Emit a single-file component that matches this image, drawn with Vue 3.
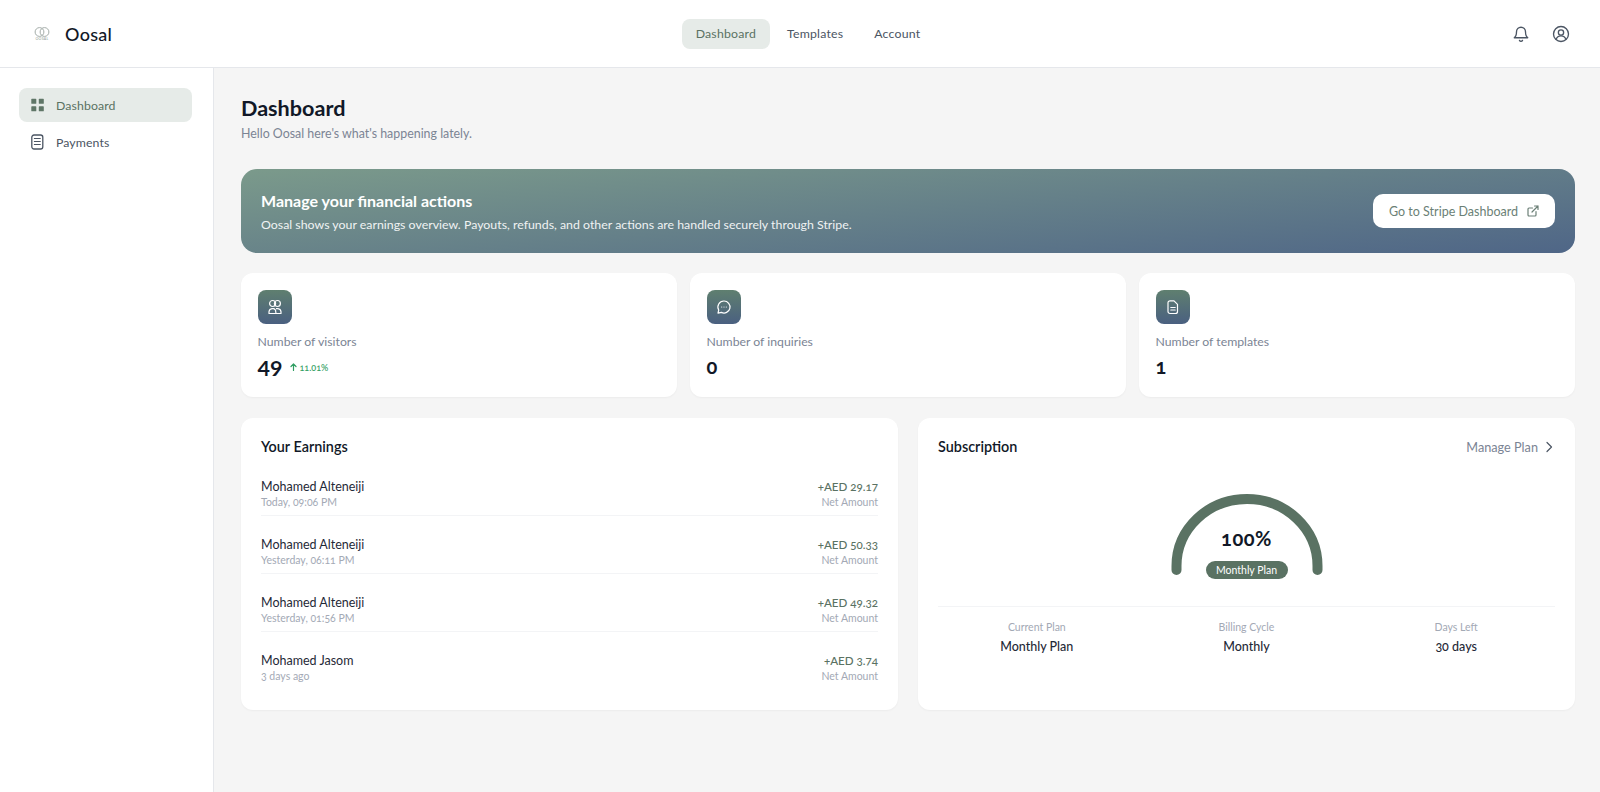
<script setup>
const earnings = [
  { name: 'Mohamed Alteneiji', time: 'Today, 09:06 PM', amount: '+AED 29.17' },
  { name: 'Mohamed Alteneiji', time: 'Yesterday, 06:11 PM', amount: '+AED 50.33' },
  { name: 'Mohamed Alteneiji', time: 'Yesterday, 01:56 PM', amount: '+AED 49.32' },
  { name: 'Mohamed Jasom', time: '3 days ago', amount: '+AED 3.74' },
]
const facts = [
  { label: 'Current Plan', value: 'Monthly Plan' },
  { label: 'Billing Cycle', value: 'Monthly' },
  { label: 'Days Left', value: '30 days' },
]
</script>

<template>
  <div class="app">
    <header class="topbar">
      <div class="brand">
        <div class="logo">
          <svg width="16" height="10" viewBox="0 0 16 10" fill="none" stroke="#a3aca8" stroke-width="1">
            <circle cx="5.500" cy="5" r="4.400" />
            <circle cx="10.500" cy="5" r="4.400" />
          </svg>
          <span class="logo-text">OOSAL</span>
        </div>
        <span class="brand-name">Oosal</span>
      </div>
      <nav class="topnav">
        <a class="topnav-item active">Dashboard</a>
        <a class="topnav-item">Templates</a>
        <a class="topnav-item">Account</a>
      </nav>
      <div class="top-actions">
        <svg width="18" height="18" viewBox="0 0 24 24" fill="none" stroke="#4b5563" stroke-width="1.800" stroke-linecap="round" stroke-linejoin="round">
          <path d="M6 9a6 6 0 0 1 12 0c0 5 1.500 7 3 8H3c1.500-1 3-3 3-8z" />
          <path d="M10 20.500a2.200 2.200 0 0 0 4 0" />
        </svg>
        <svg width="18" height="18" viewBox="0 0 24 24" fill="none" stroke="#4b5563" stroke-width="1.800" stroke-linecap="round" stroke-linejoin="round">
          <circle cx="12" cy="12" r="10" />
          <circle cx="12" cy="10" r="3.500" />
          <path d="M5.500 19c1-3 3.500-4.500 6.500-4.500s5.500 1.500 6.500 4.500" />
        </svg>
      </div>
    </header>

    <div class="body">
      <aside class="sidebar">
        <a class="side-item active">
          <svg width="14" height="14" viewBox="0 0 14 14" fill="#5f7667">
            <rect x="0.300" y="0.800" width="5" height="5" rx="0.600" />
            <rect x="7.800" y="0.800" width="5" height="5" rx="0.600" />
            <rect x="0.300" y="8.300" width="5" height="5" rx="0.600" />
            <rect x="7.800" y="8.300" width="5" height="5" rx="0.600" />
          </svg>
          <span>Dashboard</span>
        </a>
        <a class="side-item">
          <svg width="14" height="16" viewBox="0 0 14 16" fill="none" stroke="#4b5563" stroke-width="1.300" stroke-linecap="round">
            <rect x="0.800" y="1" width="11" height="14" rx="2.200" />
            <path d="M3.300 4.500h6M3.300 7.500h6M3.300 10.500h6" stroke-width="1" />
          </svg>
          <span>Payments</span>
        </a>
      </aside>

      <main class="main">
        <h1 class="title">Dashboard</h1>
        <p class="subtitle">Hello Oosal here's what's happening lately.</p>

        <section class="banner">
          <div class="banner-copy">
            <h2 class="banner-title">Manage your financial actions</h2>
            <p class="banner-text">Oosal shows your earnings overview. Payouts, refunds, and other actions are handled securely through Stripe.</p>
          </div>
          <button class="banner-btn">
            <span>Go to Stripe Dashboard</span>
            <svg width="12" height="12" viewBox="0 0 24 24" fill="none" stroke="#6b7f76" stroke-width="2.400" stroke-linecap="round" stroke-linejoin="round">
              <path d="M18 13v7a2 2 0 0 1-2 2H4a2 2 0 0 1-2-2V8a2 2 0 0 1 2-2h7" />
              <path d="M15 2h7v7M10 14L22 2" />
            </svg>
          </button>
        </section>

        <section class="stats">
          <div class="card stat">
            <div class="tile">
              <svg width="16" height="16" viewBox="0 0 16 16" fill="none" stroke="#fff" stroke-width="1.200" stroke-linejoin="round">
                <circle cx="5.600" cy="4.500" r="3" />
                <circle cx="10.400" cy="4.500" r="3" />
                <path d="M2 14.500v-1.800a3.500 3.500 0 0 1 3-3h1.500a3 3 0 0 1 2 1.500l.5 3.300z" />
                <path d="M9 14.500h5v-1.800a3.500 3.500 0 0 0-3-3H9" />
              </svg>
            </div>
            <div class="stat-label">Number of visitors</div>
            <div class="stat-row">
              <span class="stat-value large">49</span>
              <span class="trend">
                <svg width="7" height="8" viewBox="0 0 7 8" fill="none" stroke="#2f9e62" stroke-width="1.200" stroke-linecap="round" stroke-linejoin="round">
                  <path d="M3.500 7.500V1M1 3.500L3.500 1 6 3.500" />
                </svg>
                11.01%
              </span>
            </div>
          </div>
          <div class="card stat">
            <div class="tile">
              <svg width="16" height="16" viewBox="0 0 16 16" fill="none" stroke="#fff" stroke-width="1.200" stroke-linecap="round" stroke-linejoin="round">
                <path d="M8 2a6 6 0 1 1-2.600 11.400L2 14.200l.7-3.200A6 6 0 0 1 8 2z" />
                <path d="M5.700 8h.01M8 8h.01M10.300 8h.01" />
              </svg>
            </div>
            <div class="stat-label">Number of inquiries</div>
            <div class="stat-row"><span class="stat-value">0</span></div>
          </div>
          <div class="card stat">
            <div class="tile">
              <svg width="16" height="16" viewBox="0 0 16 16" fill="none" stroke="#fff" stroke-width="1.200" stroke-linecap="round" stroke-linejoin="round">
                <path d="M5 1.800h4l3.500 3.500V12.500a2 2 0 0 1-2 2H5a2 2 0 0 1-2-2V3.800a2 2 0 0 1 2-2z" />
                <path d="M5.800 8.500h4.400M5.800 11h4.400" />
              </svg>
            </div>
            <div class="stat-label">Number of templates</div>
            <div class="stat-row"><span class="stat-value">1</span></div>
          </div>
        </section>

        <section class="lower">
          <div class="card earnings">
            <h3 class="card-title">Your Earnings</h3>
            <ul class="earn-list">
              <li v-for="(e, i) in earnings" :key="i" class="earn-row">
                <div>
                  <div class="earn-name">{{ e.name }}</div>
                  <div class="earn-sub">{{ e.time }}</div>
                </div>
                <div class="earn-right">
                  <div class="earn-amount">{{ e.amount }}</div>
                  <div class="earn-sub">Net Amount</div>
                </div>
              </li>
            </ul>
          </div>

          <div class="card subscription">
            <div class="sub-head">
              <h3 class="card-title">Subscription</h3>
              <a class="manage">
                Manage Plan
                <svg width="12" height="12" viewBox="0 0 12 12" fill="none" stroke="#4b5563" stroke-width="1.200" stroke-linecap="round" stroke-linejoin="round">
                  <path d="M4 1.500L8.500 6 4 10.500" />
                </svg>
              </a>
            </div>
            <div class="gauge">
              <svg class="gauge-arc" width="152" height="82" viewBox="0 0 152 82" fill="none">
                <path d="M5.500 76V72a70.500 67 0 0 1 141 0v4" stroke="#5a7263" stroke-width="10" stroke-linecap="round" />
              </svg>
              <div class="gauge-pct">100%</div>
              <div class="gauge-pill">Monthly Plan</div>
            </div>
            <div class="facts">
              <div v-for="f in facts" :key="f.label" class="fact">
                <div class="fact-label">{{ f.label }}</div>
                <div class="fact-value">{{ f.value }}</div>
              </div>
            </div>
          </div>
        </section>
      </main>
    </div>
  </div>
</template>

<style>
html, body { margin: 0; background: #f5f5f5; }
</style>

<style scoped>
.app {
  font-family: Lato, "Open Sans", sans-serif;
  font-variant-numeric: oldstyle-nums;
  height: 792px;
  display: flex;
  flex-direction: column;
  color: #111827;
  overflow: hidden;
}
.topbar {
  height: 68px;
  flex: none;
  box-sizing: border-box;
  background: #fff;
  border-bottom: 1px solid #e5e7eb;
  display: grid;
  grid-template-columns: 1fr auto 1fr;
  align-items: center;
  padding: 0 30px 0 33px;
}
.brand { display: flex; align-items: center; gap: 14px; }
.logo { width: 18px; display: flex; flex-direction: column; align-items: center; }
.logo svg { display: block; }
.logo-text { font-size: 3.500px; line-height: 4px; color: #8a9690; letter-spacing: 0.3px; }
.brand-name { font-size: 18px; font-weight: 500; letter-spacing: 0.3px; color: #111827; }
.topnav { display: flex; gap: 3px; margin-left: 13px; }
.topnav-item {
  font-size: 12.300px;
  line-height: 30px;
  padding: 0 14px;
  border-radius: 8px;
  color: #4b5563;
  letter-spacing: 0.2px;
}
.topnav-item.active { background: #e6ebe8; color: #5a7263; }
.top-actions { display: flex; justify-content: flex-end; gap: 22px; }
.body { flex: 1; display: flex; min-height: 0; }
.sidebar {
  width: 214px;
  flex: none;
  box-sizing: border-box;
  background: #fff;
  border-right: 1px solid #e5e7eb;
  padding: 20px 21px 0 19px;
  display: flex;
  flex-direction: column;
  gap: 3px;
}
.side-item {
  height: 34px;
  display: flex;
  align-items: center;
  gap: 11px;
  padding: 0 12px;
  border-radius: 8px;
  font-size: 12.300px;
  color: #4b5563;
  letter-spacing: 0.1px;
}
.side-item.active { background: #e6ebe8; color: #5a7263; }
.main { flex: 1; min-width: 0; padding: 27px 25px 0 27px; }
.title { margin: 0; font-size: 21.600px; line-height: 26px; font-weight: 700; color: #111827; }
.subtitle { margin: 5px 0 0; font-size: 12.400px; line-height: 16px; color: #7b8494; }
.banner {
  margin-top: 27px;
  height: 84px;
  box-sizing: border-box;
  border-radius: 16px;
  background: linear-gradient(175deg, #7b9a8b 0%, #4f6687 100%);
  display: flex;
  justify-content: space-between;
  align-items: center;
  padding: 0 20px;
  color: #fff;
}
.banner-copy { padding-top: 2px; }
.banner-title { margin: 0; font-size: 16px; line-height: 20px; font-weight: 700; }
.banner-text { margin: 6px 0 0; font-size: 12.350px; line-height: 16px; opacity: 0.9; }
.banner-btn {
  width: 182px;
  height: 34px;
  border: 0;
  border-radius: 10px;
  background: #fff;
  color: #6b7f76;
  font: inherit;
  font-size: 12.500px;
  display: flex;
  align-items: center;
  justify-content: center;
  gap: 9px;
}
.card { background: #fff; border-radius: 12px; box-shadow: 0 1px 2px rgba(0, 0, 0, 0.04); }
.stats { margin-top: 20px; display: grid; grid-template-columns: repeat(3, 1fr); gap: 13px; }
.stat { height: 124px; box-sizing: border-box; padding: 17px 16.500px; }
.tile {
  width: 34px;
  height: 34px;
  border-radius: 8px;
  background: linear-gradient(180deg, #5f7f6f, #4a6080);
  display: flex;
  align-items: center;
  justify-content: center;
}
.stat-label { margin-top: 10px; font-size: 12.250px; line-height: 16px; color: #7b8494; }
.stat-row { margin-top: 5px; display: flex; align-items: center; gap: 8px; height: 26px; }
.stat-value { font-size: 20px; font-weight: 700; color: #111827; margin-bottom: 4px; }
.stat-value.large { font-size: 21.500px; font-variant-numeric: lining-nums; margin-bottom: 0; }
.trend { font-size: 9px; font-weight: 500; color: #2f9e62; display: inline-flex; gap: 2px; align-items: center; margin-bottom: 2px; }
.lower { margin-top: 21px; display: grid; grid-template-columns: 1fr 1fr; gap: 20px; }
.earnings, .subscription { height: 292px; box-sizing: border-box; padding: 19px 20px; }
.card-title { margin: 0; font-size: 14.400px; line-height: 20px; font-weight: 600; color: #111827; }
.earn-list { list-style: none; margin: 22px 0 0; padding: 0; }
.earn-row {
  display: flex;
  justify-content: space-between;
  height: 30px;
  padding-bottom: 6px;
  margin-bottom: 21px;
  border-bottom: 1px solid #f3f4f6;
}
.earn-row:last-child { border-bottom: 0; }
.earn-name { font-size: 12.500px; line-height: 15px; color: #1f2937; }
.earn-sub { margin-top: 1px; font-size: 10.500px; line-height: 14px; color: #a3a9b5; }
.earn-right { text-align: right; }
.earn-amount { font-size: 11.600px; line-height: 15px; font-weight: 500; color: #5a7263; }
.sub-head { display: flex; justify-content: space-between; align-items: center; }
.manage { font-size: 12.700px; color: #7b8494; display: inline-flex; align-items: center; gap: 5px; }
.gauge { position: relative; margin: 37px auto 0; width: 152px; height: 106px; }
.gauge-arc { display: block; }
.gauge-pct {
  position: absolute;
  left: 0;
  right: 0;
  top: 32px;
  text-align: center;
  font-size: 20px;
  line-height: 24px;
  font-weight: 700;
  letter-spacing: 0.5px;
}
.gauge-pill {
  position: absolute;
  left: 35px;
  top: 67px;
  width: 82px;
  height: 18px;
  border-radius: 9px;
  background: #5a7263;
  color: #fff;
  font-size: 10.500px;
  line-height: 18px;
  text-align: center;
}
.facts {
  margin-top: 6px;
  padding-top: 13px;
  border-top: 1px solid #f3f4f6;
  display: grid;
  grid-template-columns: repeat(3, 1fr);
  column-gap: 12px;
  text-align: center;
}
.fact-label { font-size: 10.500px; line-height: 14px; color: #a3a9b5; }
.fact-value { margin-top: 5px; font-size: 12.500px; line-height: 16px; font-weight: 500; color: #1f2937; }
</style>
